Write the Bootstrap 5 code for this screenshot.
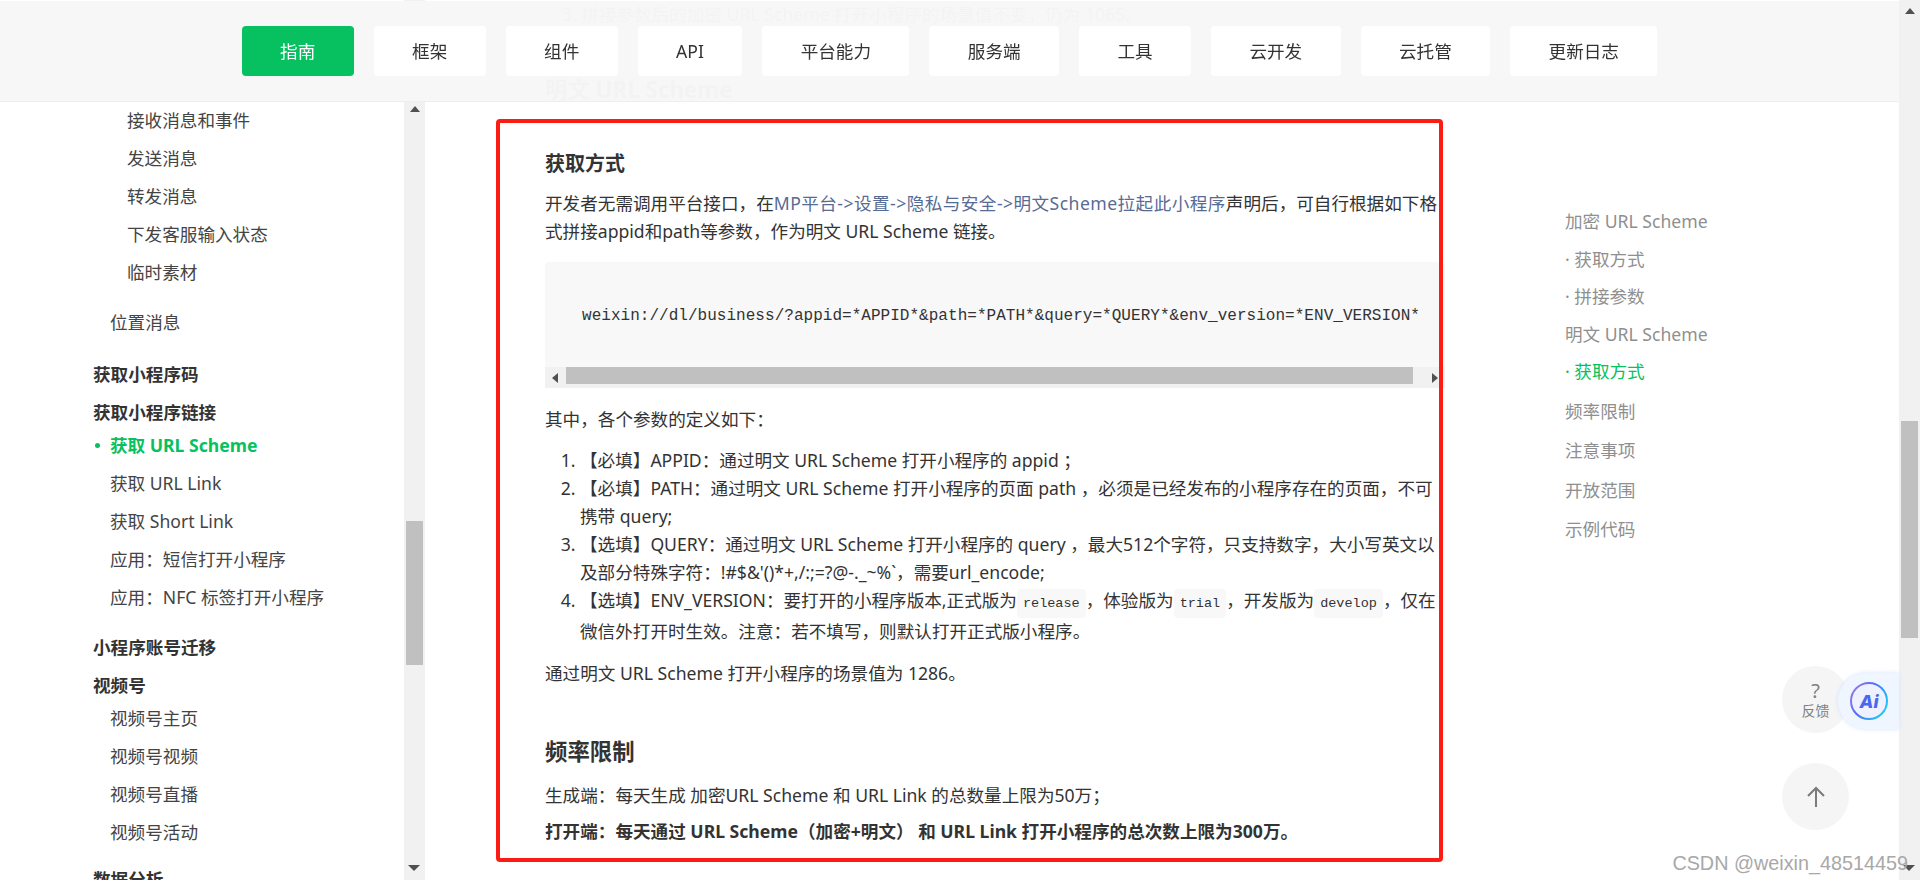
<!DOCTYPE html>
<html lang="zh-CN">
<head>
    <meta charset="UTF-8">
    <meta name="viewport" content="width=device-width, initial-scale=1.0">
    <title>获取 URL Scheme</title>
    <link href="https://cdn.jsdelivr.net/npm/bootstrap@5.3.0/dist/css/bootstrap.min.css" rel="stylesheet">
    <style>
        body { height: 880px; overflow: hidden; font-family: "Noto Sans", "Noto Sans CJK SC", sans-serif; font-size: 17.6px; color: #333; background: #fff; }

        /* top bar, semi transparent so the page shows through */
        .top-bar { top: 1px; left: 0; width: 1899px; height: 101px; padding-top: 25px; background: rgba(247,247,247,.98); border-bottom: 1px solid #eee; z-index: 5; }
        .top-row { gap: 20px; }
        .top-btn { height: 50px; line-height: 50px; padding: 0 38.4px; border: 0; border-radius: 4px; background: #fff; color: #333; font-size: 17.6px; }
        .top-btn.active, .top-btn:hover { background: #07c160; color: #fff; }

        /* fake scrollbars */
        .bar-track { width: 21px; height: 880px; background: #f1f1f1; flex: none; }
        .bar-thumb { width: 17px; margin-left: 2px; background: #c0c0c0; }
        .arrow-up { width: 0; height: 0; margin: 8px auto 0; border: 5px solid transparent; border-top: 0; border-bottom: 6px solid #505050; }
        .arrow-down { width: 0; height: 0; border: 6px solid transparent; border-bottom: 0; border-top: 6px solid #505050; position: absolute; left: 4px; top: 865px; }
        .side-up { margin-top: 106px; }
        .side-thumb { margin-top: 409px; height: 144px; }
        .page-thumb { margin-top: 407px; height: 217px; }

        /* left menu */
        .side-menu { width: 404px; height: 880px; padding-top: 101px; flex: none; }
        .side-item { display: block; line-height: 38px; color: #444; text-decoration: none; white-space: nowrap; }
        .lvl-3 { padding-left: 127px; }
        .lvl-2 { padding-left: 110px; }
        .lvl-1 { padding-left: 93px; font-weight: 700; color: #333; }
        .side-item.current { color: #07c160; font-weight: 700; }
        .side-dot { display: inline-block; width: 5px; height: 5px; margin: 0 10px 3px -15px; border-radius: 50%; background: #07c160; vertical-align: middle; }
        .gap-12 { margin-top: 12px; }
        .gap-14 { margin-top: 14px; }
        .gap-9 { margin-top: 9px; }
        .pull-5 { margin-top: -5px; }

        /* document column */
        .doc-col { width: 1020px; height: 880px; padding-left: 120px; flex: none; line-height: 28px; white-space: nowrap; }
        .doc-col p { margin: 0; }
        .ghost-line { margin: -2px 0 0; padding-left: 17px; }
        .doc-h2 { margin: 46px 0 0; font-size: 22.4px; line-height: 32px; font-weight: 700; }
        .doc-h3 { margin: 44px 0 0; font-size: 20px; line-height: 28px; font-weight: 700; }
        .doc-link { color: #576b95; text-decoration: none; letter-spacing: .45px; }
        .code-box { height: 124px; margin-top: 17px; background: #f8f8f8; border-radius: 4px 4px 0 0; }
        .code-text { height: 103px; margin: 0; padding: 39px 0 0 37px; font-family: "Liberation Mono", monospace; font-size: 16px; letter-spacing: .03px; line-height: 30px; color: #333; overflow: hidden; }
        .code-scroll { height: 21px; background: #f1f1f1; }
        .code-thumb { height: 17px; margin: 2px 0 2px 21px; width: 847px; background: #c0c0c0; }
        .arrow-left { width: 0; height: 0; border: 5px solid transparent; border-left: 0; border-right: 6px solid #505050; position: absolute; left: 7px; top: 6px; }
        .arrow-right { width: 0; height: 0; border: 5px solid transparent; border-right: 0; border-left: 6px solid #505050; position: absolute; left: 887px; top: 6px; }
        .param-list { margin: 13px 0 0; padding-left: 35px; }
        .inline-code { display: inline-block; margin: -1px 0; padding: 7px 6px; font-family: "Liberation Mono", monospace; font-size: 13.5px; line-height: 15px; color: #333; background: #f8f8f8; border-radius: 4px; vertical-align: baseline; }
        .mt-11 { margin-top: 11px !important; }
        .mt-13 { margin-top: 13px !important; }
        .mt-14 { margin-top: 14px !important; }
        .mt-19 { margin-top: 19px !important; }
        .mt-8 { margin-top: 8px !important; }
        .doc-h3.big { margin-top: 49px; font-size: 22.4px; line-height: 32px; }

        /* right outline */
        .outline-col { padding: 203px 0 0 120px; flex: 1 1 auto; }
        .outline-row { line-height: 37.5px; color: #8f8f8f; text-decoration: none; display: block; white-space: nowrap; }
        .outline-row.tall { line-height: 39.5px; }
        .outline-row.first-tall { margin-top: 1px; }
        .outline-row.current { color: #07c160; }

        /* floating bits */
        .float-circle { left: 1782px; width: 67px; height: 67px; border-radius: 50%; background: #f5f5f5; color: #808080; z-index: 6; }
        .feedback { top: 666px; font-size: 14px; line-height: 17px; }
        .feedback b { font-weight: 400; font-size: 20px; line-height: 22px; }
        .go-top { top: 763px; }
        .ai-pill { left: 1838px; top: 673px; width: 61px; height: 56px; padding-left: 11px; border-radius: 28px 0 0 28px; background: #f0f6ff; box-shadow: 0 0 5px #d5e2ff; z-index: 7; }
        .red-frame { left: 496px; top: 119px; width: 947px; height: 743px; border: 4px solid #fb1d14; border-radius: 4px; z-index: 4; pointer-events: none; }
        .water-mark { right: 12px; top: 850px; font-family: "Liberation Sans", sans-serif; font-size: 19.8px; line-height: 26px; color: #a8a8a8; z-index: 8; white-space: nowrap; }
    </style>
</head>
<body class="d-flex position-relative">
    <!-- Top navigation -->
    <header class="top-bar position-fixed">
        <nav class="d-flex justify-content-center top-row">
            <a class="btn top-btn active" href="#">指南</a>
            <a class="btn top-btn" href="#">框架</a>
            <a class="btn top-btn" href="#">组件</a>
            <a class="btn top-btn" href="#">API</a>
            <a class="btn top-btn" href="#">平台能力</a>
            <a class="btn top-btn" href="#">服务端</a>
            <a class="btn top-btn" href="#">工具</a>
            <a class="btn top-btn" href="#">云开发</a>
            <a class="btn top-btn" href="#">云托管</a>
            <a class="btn top-btn" href="#">更新日志</a>
        </nav>
    </header>

    <!-- Left menu -->
    <aside class="side-menu overflow-hidden">
        <a class="side-item lvl-3" href="#">接收消息和事件</a>
        <a class="side-item lvl-3" href="#">发送消息</a>
        <a class="side-item lvl-3" href="#">转发消息</a>
        <a class="side-item lvl-3" href="#">下发客服输入状态</a>
        <a class="side-item lvl-3" href="#">临时素材</a>
        <a class="side-item lvl-2 gap-12" href="#">位置消息</a>
        <a class="side-item lvl-1 gap-14" href="#">获取小程序码</a>
        <a class="side-item lvl-1" href="#">获取小程序链接</a>
        <a class="side-item lvl-2 current pull-5" href="#"><span class="side-dot"></span>获取 URL Scheme</a>
        <a class="side-item lvl-2" href="#">获取 URL Link</a>
        <a class="side-item lvl-2" href="#">获取 Short Link</a>
        <a class="side-item lvl-2" href="#">应用：短信打开小程序</a>
        <a class="side-item lvl-2" href="#">应用：NFC 标签打开小程序</a>
        <a class="side-item lvl-1 gap-12" href="#">小程序账号迁移</a>
        <a class="side-item lvl-1" href="#">视频号</a>
        <a class="side-item lvl-2 pull-5" href="#">视频号主页</a>
        <a class="side-item lvl-2" href="#">视频号视频</a>
        <a class="side-item lvl-2" href="#">视频号直播</a>
        <a class="side-item lvl-2" href="#">视频号活动</a>
        <a class="side-item lvl-1 gap-9" href="#">数据分析</a>
    </aside>
    <div class="bar-track position-relative side-track">
        <div class="arrow-up side-up"></div>
        <div class="bar-thumb side-thumb"></div>
        <div class="arrow-down"></div>
    </div>

    <!-- Document -->
    <main class="doc-col overflow-hidden">
        <p class="ghost-line">3. 拼接参数后的加密 URL Scheme 打开小程序的场景值不变，仍为 1065。</p>
        <h2 class="doc-h2">明文 URL Scheme</h2>
        <h3 class="doc-h3">获取方式</h3>
        <p class="mt-11">开发者无需调用平台接口，在<a class="doc-link" href="#">MP平台-&gt;设置-&gt;隐私与安全-&gt;明文Scheme拉起此小程序</a>声明后，可自行根据如下格<br>式拼接appid和path等参数，作为明文 URL Scheme 链接。</p>
        <div class="code-box">
            <pre class="code-text">weixin://dl/business/?appid=*APPID*&amp;path=*PATH*&amp;query=*QUERY*&amp;env_version=*ENV_VERSION*</pre>
            <div class="code-scroll position-relative">
                <div class="arrow-left"></div>
                <div class="code-thumb"></div>
                <div class="arrow-right"></div>
            </div>
        </div>
        <p class="mt-19">其中，各个参数的定义如下：</p>
        <ol class="param-list">
            <li>【必填】APPID：通过明文 URL Scheme 打开小程序的 appid ；</li>
            <li>【必填】PATH：通过明文 URL Scheme 打开小程序的页面 path ，必须是已经发布的小程序存在的页面，不可<br>携带 query;</li>
            <li>【选填】QUERY：通过明文 URL Scheme 打开小程序的 query ，最大512个字符，只支持数字，大小写英文以<br>及部分特殊字符：!#$&amp;'()*+,/:;=?@-._~%`，需要url_encode;</li>
            <li>【选填】ENV_VERSION：要打开的小程序版本,正式版为<code class="inline-code">release</code>，体验版为<code class="inline-code">trial</code>，开发版为<code class="inline-code">develop</code>，仅在<br>微信外打开时生效。注意：若不填写，则默认打开正式版小程序。</li>
        </ol>
        <p class="mt-14">通过明文 URL Scheme 打开小程序的场景值为 1286。</p>
        <h3 class="doc-h3 big">频率限制</h3>
        <p class="mt-13">生成端：每天生成 加密URL Scheme 和 URL Link 的总数量上限为50万；</p>
        <p class="mt-8"><strong>打开端：每天通过 URL Scheme（加密+明文） 和 URL Link 打开小程序的总次数上限为300万。</strong></p>
    </main>

    <!-- Right outline -->
    <aside class="outline-col">
        <a class="outline-row" href="#">加密 URL Scheme</a>
        <a class="outline-row" href="#">· 获取方式</a>
        <a class="outline-row" href="#">· 拼接参数</a>
        <a class="outline-row" href="#">明文 URL Scheme</a>
        <a class="outline-row current" href="#">· 获取方式</a>
        <a class="outline-row tall first-tall" href="#">频率限制</a>
        <a class="outline-row tall" href="#">注意事项</a>
        <a class="outline-row tall" href="#">开放范围</a>
        <a class="outline-row tall" href="#">示例代码</a>
    </aside>
    <div class="bar-track position-relative page-track">
        <div class="arrow-up"></div>
        <div class="bar-thumb page-thumb"></div>
        <div class="arrow-down"></div>
    </div>

    <!-- Floating buttons -->
    <div class="float-circle feedback position-absolute d-flex flex-column align-items-center justify-content-center"><b>?</b><span>反馈</span></div>
    <div class="ai-pill position-absolute d-flex align-items-center">
        <svg width="40" height="40" viewBox="0 0 40 40">
            <defs>
                <linearGradient id="aiRing" x1="0" y1="0" x2="1" y2="0.6">
                    <stop offset="0" stop-color="#a97ae8"/>
                    <stop offset="0.5" stop-color="#4f6ef7"/>
                    <stop offset="1" stop-color="#22c3f5"/>
                </linearGradient>
            </defs>
            <circle cx="20" cy="20" r="18" fill="#eef1ff" stroke="url(#aiRing)" stroke-width="2"/>
            <text x="20" y="26.5" text-anchor="middle" font-family="Inter, sans-serif" font-size="18" font-weight="800" font-style="italic" fill="#4a68ec">Ai</text>
        </svg>
    </div>
    <div class="float-circle go-top position-absolute d-flex align-items-center justify-content-center">
        <svg width="20" height="22" viewBox="0 0 20 22" fill="none" stroke="#7a7a7a" stroke-width="2">
            <path d="M10 21V2M2 10l8-8 8 8"/>
        </svg>
    </div>
    <div class="water-mark position-absolute">CSDN @weixin_48514459</div>

    <!-- Red annotation frame drawn over the screenshot -->
    <div class="red-frame position-absolute"></div>
</body>
</html>
